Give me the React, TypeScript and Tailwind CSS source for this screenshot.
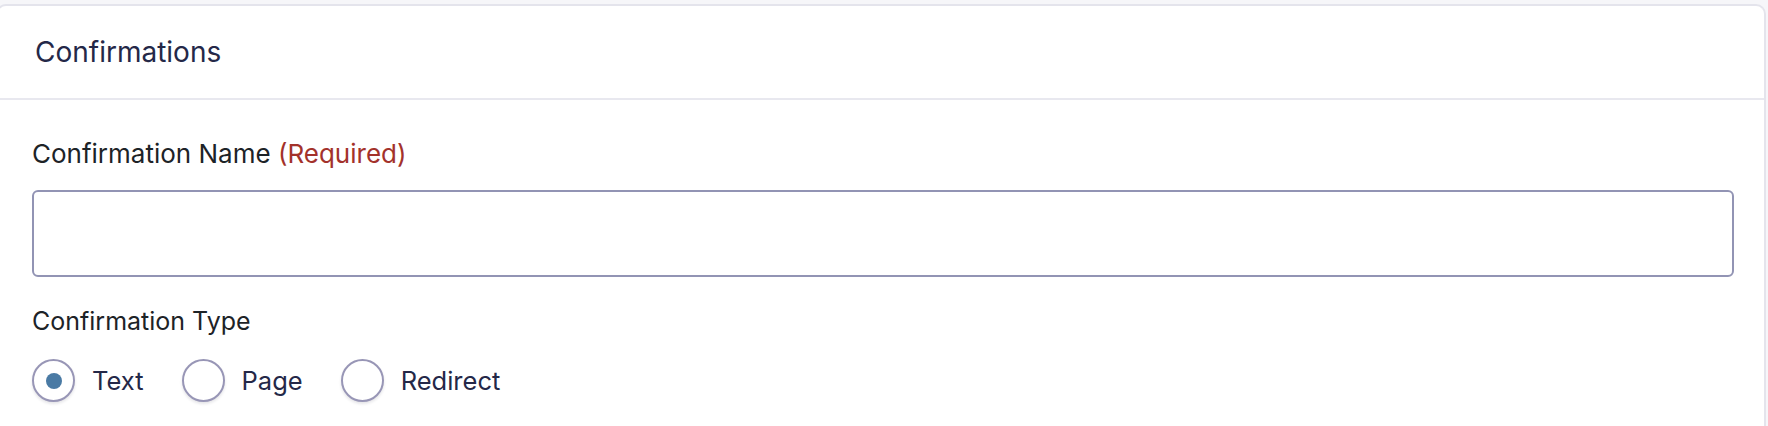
import { useState } from 'react'

const types = ['Text', 'Page', 'Redirect']

export default function App() {
  const [type, setType] = useState('Text')
  const [name, setName] = useState('')

  return (
    <div
      className="min-h-[426px] w-full overflow-hidden bg-[#f6f6f9] pt-[4px] pr-[2px]"
      style={{ fontFamily: 'Inter, "Noto Sans", sans-serif' }}
    >
      <div className="-ml-[4px] rounded-t-[10px] border-2 border-b-0 border-[#e4e4ec] bg-white h-[430px]">
        <div className="flex h-[94px] items-center border-b-2 border-[#e8e8ef] pl-[37px]">
          <h2 className="text-[28px] leading-none text-[#242848]">Confirmations</h2>
        </div>
        <div className="pl-[34px] pr-[30px] pt-[37px]">
          <label className="block text-[26px] leading-[34px] text-[#1d2327]">
            Confirmation Name <span className="text-[#a3322b]">(Required)</span>
          </label>
          <input
            value={name}
            onChange={e => setName(e.target.value)}
            className="mt-[19px] block h-[87px] w-full rounded-[6px] border-2 border-[#9294b4] bg-white px-4 text-[25px] outline-none"
          />
          <div className="mt-[28px] text-[25px] leading-[32px] text-[#1d2327]">Confirmation Type</div>
          <div className="mt-[22px] flex items-center">
            {types.map(t => (
              <label
                key={t}
                className="mr-[38px] flex cursor-pointer items-center"
                onClick={() => setType(t)}
              >
                <span className="flex h-[43px] w-[43px] items-center justify-center rounded-full border-2 border-[#9896b6] bg-white shadow-[0_2px_3px_rgba(30,30,60,0.12)]">
                  {type === t && <span className="h-[16px] w-[16px] rounded-full bg-[#4a7aa4]" />}
                </span>
                <span className="ml-[17px] text-[25.5px] leading-none text-[#242848]">{t}</span>
              </label>
            ))}
          </div>
        </div>
      </div>
    </div>
  )
}
